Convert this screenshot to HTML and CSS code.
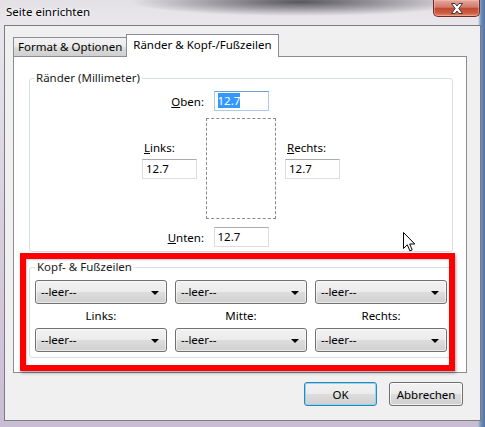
FILE: index.html
```html
<!DOCTYPE html>
<html lang="de">
<head>
    <meta charset="UTF-8">
    <meta name="viewport" content="width=device-width, initial-scale=1.0">
    <title>Seite einrichten</title>
    <link rel="stylesheet" href="styles.css">
</head>
<body>

<div class="window">
    <div class="titlebar">
        <span class="title">Seite einrichten</span>
        <button class="close-btn" title="Schließen">
            <svg width="14" height="11" viewBox="0 0 14 11">
                <path d="M1.5 0.5 H5 L7 3 L9 0.5 H12.5 L8.8 5.5 L12.5 10.5 H9 L7 8 L5 10.5 H1.5 L5.2 5.5 Z" fill="#ffffff" stroke="#3b3b3b" stroke-width="1" stroke-linejoin="round"/>
            </svg>
        </button>
    </div>

    <div class="client">
        <div class="tabs">
            <div class="tab">Format &amp; Optionen</div>
            <div class="tab active">Ränder &amp; Kopf-/Fußzeilen</div>
        </div>

        <div class="panel">
            <fieldset class="group margins">
                <legend>Ränder (Millimeter)</legend>
                <div class="margin-grid">
                    <label class="side-label top-label"><u>O</u>ben:</label>
                    <div class="textbox focused top-box"><span class="selected">12.7</span></div>

                    <div class="side left-side">
                        <label><u>L</u>inks:</label>
                        <div class="textbox">12.7</div>
                    </div>
                    <div class="page-preview"></div>
                    <div class="side right-side">
                        <label><u>R</u>echts:</label>
                        <div class="textbox">12.7</div>
                    </div>

                    <label class="side-label bottom-label"><u>U</u>nten:</label>
                    <div class="textbox bottom-box">12.7</div>
                </div>
            </fieldset>

            <fieldset class="group headers">
                <legend>Kopf- &amp; Fußzeilen</legend>
                <div class="header-grid">
                    <div class="combo">--leer--</div>
                    <div class="combo">--leer--</div>
                    <div class="combo">--leer--</div>
                    <div class="col-label">Links:</div>
                    <div class="col-label">Mitte:</div>
                    <div class="col-label">Rechts:</div>
                    <div class="combo">--leer--</div>
                    <div class="combo">--leer--</div>
                    <div class="combo">--leer--</div>
                </div>
            </fieldset>

            <!-- red annotation frame drawn over the dialog -->
            <div class="highlight"></div>

            <svg class="cursor" width="13" height="20" viewBox="0 0 13 20">
                <path d="M0.5 0.5 V16.5 L4.3 12.8 L6.9 18.9 L9.2 17.9 L6.7 12 H11.8 Z" fill="#ffffff" stroke="#000000" stroke-width="1" stroke-linejoin="miter"/>
            </svg>
        </div>

        <div class="actions">
            <button class="btn default">OK</button>
            <button class="btn">Abbrechen</button>
        </div>
    </div>
</div>

</body>
</html>
```

FILE: styles.css
```css
body {
    margin: 0;
    font-family: "Noto Sans", "Liberation Sans", sans-serif;
    font-size: 11.5px;
    color: #000;
}
.window {
    width: 485px;
    height: 427px;
    overflow: hidden;
    background:
        radial-gradient(ellipse 170px 14px at 300px 2px, rgba(40, 40, 45, 0.75), rgba(40, 40, 45, 0) 100%),
        linear-gradient(to right, rgba(0, 0, 0, 0) 478px, #6f8fb8 481px, #4f74a6 485px),
        linear-gradient(to bottom, #e3e0e6 0px, #e9e6ec 25px, #d9d1df 200px, #c9bdd3 427px);
}
.titlebar {
    height: 25px;
    display: flex;
    justify-content: space-between;
    align-items: flex-start;
}
.title {
    margin: 4px 0 0 6px;
    line-height: 16px;
    font-size: 11.5px;
    text-shadow: 0 0 6px #fff, 0 0 3px #fff;
}
.close-btn {
    width: 47px;
    height: 17px;
    margin-right: 5px;
    padding: 0;
    border: 1px solid #6b2d27;
    border-top: none;
    border-radius: 0 0 5px 5px;
    background: linear-gradient(to bottom, #e6a79c 0%, #d27a6a 45%, #c04a34 52%, #cf5a3e 80%, #e08a66 100%);
    box-shadow: inset 0 0 0 1px rgba(255, 200, 190, 0.45);
    display: flex;
    align-items: center;
    justify-content: center;
}
.close-btn svg {
    display: block;
}
.client {
    margin: 0 4px;
    height: 396px;
    box-sizing: border-box;
    border: 1px solid #7b7b80;
    background: #f0f0f0;
    padding-top: 8px;
}
.tabs {
    display: flex;
    align-items: flex-end;
    padding-left: 8px;
    height: 22px;
}
.tab {
    height: 19px;
    box-sizing: border-box;
    padding: 0 4px;
    line-height: 18px;
    border: 1px solid #898c95;
    border-bottom: none;
    background: linear-gradient(to bottom, #f2f2f2 0%, #ebebeb 50%, #dddddd 51%, #cfcfcf 100%);
}
.tab.active {
    height: 23px;
    margin-bottom: -1px;
    margin-left: -1px;
    padding: 0 6px;
    line-height: 19px;
    background: #fff;
    position: relative;
    z-index: 1;
}
.panel {
    position: relative;
    margin: 0 13px 0 8px;
    border: 1px solid #898c95;
    background: #fff;
    padding: 13px 13px 14px 15px;
}
.group {
    margin: 0;
    border: 1px solid #d5dfe5;
    border-radius: 3px;
    padding: 5px 4px 4px 4px;
}
.group legend {
    padding: 0 2px;
    line-height: 16px;
    color: #1a1a1a;
}
.margin-grid {
    display: grid;
    grid-template-columns: 1fr 70px 1fr;
}
.side-label {
    grid-column: 1;
    justify-self: end;
    align-self: center;
    margin-right: 2px;
}
.top-label, .top-box {
    grid-row: 1;
}
.bottom-label, .bottom-box {
    grid-row: 3;
    margin-top: 8px;
}
.top-box, .bottom-box {
    grid-column: 2;
    justify-self: center;
}
.page-preview {
    grid-column: 2;
    grid-row: 2;
    margin-top: 7px;
    height: 101px;
    box-sizing: border-box;
    border: 1px dashed #8a8a8a;
}
.side {
    grid-row: 2;
    display: flex;
    flex-direction: column;
    margin-top: 29px;
}
.side label {
    line-height: 16px;
    padding-left: 2px;
    margin-bottom: 3px;
}
.left-side {
    grid-column: 1;
    justify-self: end;
    margin-right: 9px;
}
.right-side {
    grid-column: 3;
    justify-self: start;
    margin-left: 9px;
}
.textbox {
    width: 55px;
    height: 20px;
    box-sizing: border-box;
    border: 1px solid #dadde3;
    border-top-color: #abadb3;
    padding: 0 3px;
    line-height: 18px;
    background: #fff;
}
.textbox.focused {
    border-color: #a9cbe9;
    border-top-color: #6f9fd0;
}
.selected {
    background: #3399ff;
    color: #fff;
}
.headers {
    margin-top: 7px;
    padding: 5px;
}
.header-grid {
    display: grid;
    grid-template-columns: repeat(3, 132px);
    column-gap: 8px;
}
.combo {
    position: relative;
    height: 24px;
    box-sizing: border-box;
    border: 1px solid #707070;
    border-radius: 3px;
    padding-left: 5px;
    line-height: 21px;
    background: linear-gradient(to bottom, #f2f2f2 0%, #ebebeb 50%, #dddddd 51%, #cfcfcf 100%);
    box-shadow: inset 0 0 0 1px rgba(255, 255, 255, 0.6);
}
.combo::after {
    content: "";
    position: absolute;
    right: 7px;
    top: 10px;
    border-left: 4px solid transparent;
    border-right: 4px solid transparent;
    border-top: 4px solid #000;
}
.col-label {
    text-align: center;
    line-height: 24px;
}
.highlight {
    position: absolute;
    left: 6px;
    top: 196px;
    width: 435px;
    height: 118px;
    box-sizing: border-box;
    border: 6px solid #ff0000;
    box-shadow: 1px 2px 3px rgba(0, 0, 0, 0.35), inset 1px 1px 2px rgba(0, 0, 0, 0.2);
    pointer-events: none;
}
.cursor {
    position: absolute;
    left: 389px;
    top: 175px;
}
.actions {
    display: flex;
    justify-content: flex-end;
    gap: 12px;
    margin: 9px 17px 0 0;
}
.btn {
    width: 74px;
    height: 24px;
    font-family: inherit;
    font-size: 11.5px;
    color: #000;
    border: 1px solid #707070;
    border-radius: 3px;
    background: linear-gradient(to bottom, #f2f2f2 0%, #ebebeb 50%, #dddddd 51%, #cfcfcf 100%);
    box-shadow: inset 0 0 0 1px rgba(255, 255, 255, 0.7);
    padding: 0;
}
.btn.default {
    width: 73px;
    border-color: #3c7fb1;
    box-shadow: inset 0 0 0 1px #7fdcf8;
}
```
